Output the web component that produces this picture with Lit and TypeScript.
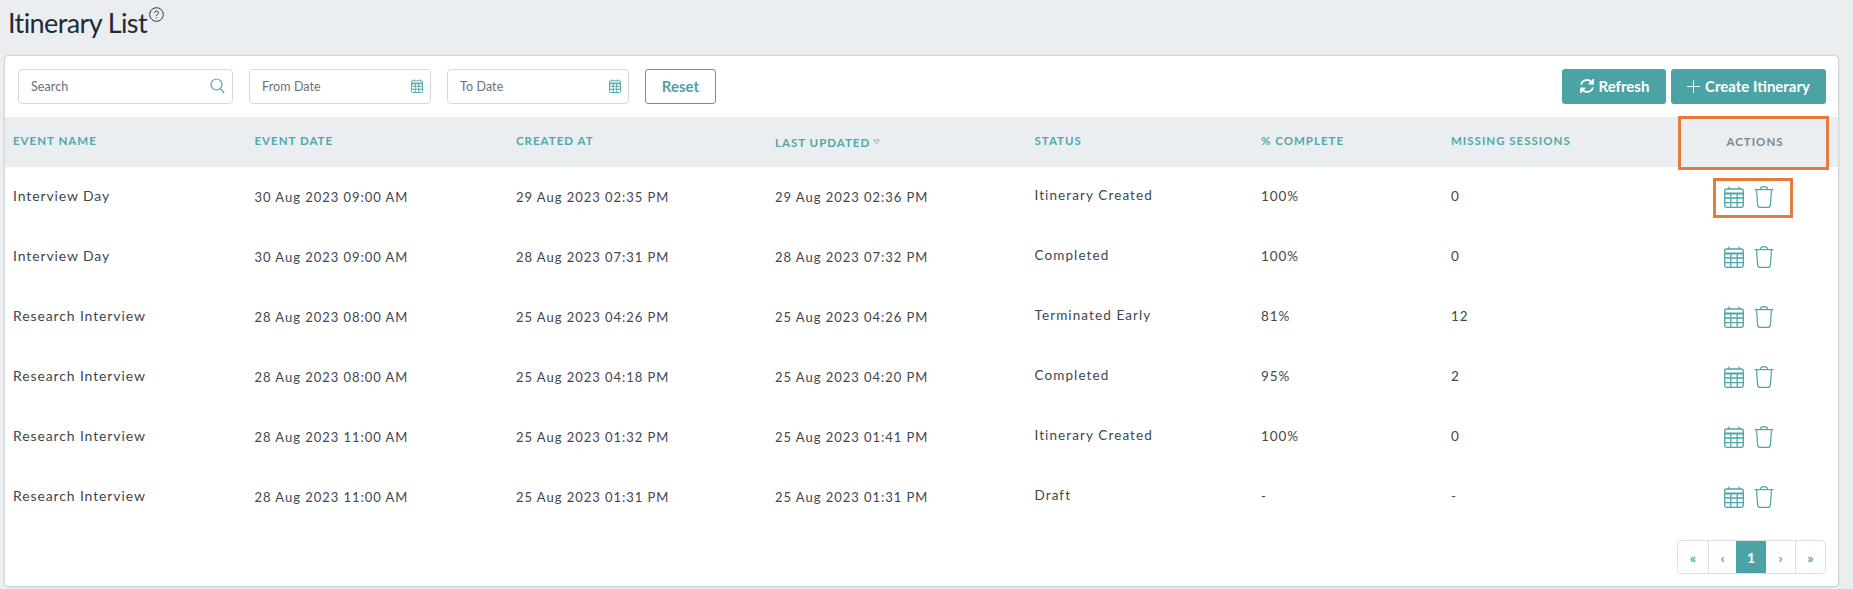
import { LitElement, html, css, svg } from "lit";
import { customElement } from "lit/decorators.js";

const rows = [
  ["Interview Day", "30 Aug 2023 09:00 AM", "29 Aug 2023 02:35 PM", "29 Aug 2023 02:36 PM", "Itinerary Created", "100%", "0"],
  ["Interview Day", "30 Aug 2023 09:00 AM", "28 Aug 2023 07:31 PM", "28 Aug 2023 07:32 PM", "Completed", "100%", "0"],
  ["Research Interview", "28 Aug 2023 08:00 AM", "25 Aug 2023 04:26 PM", "25 Aug 2023 04:26 PM", "Terminated Early", "81%", "12"],
  ["Research Interview", "28 Aug 2023 08:00 AM", "25 Aug 2023 04:18 PM", "25 Aug 2023 04:20 PM", "Completed", "95%", "2"],
  ["Research Interview", "28 Aug 2023 11:00 AM", "25 Aug 2023 01:32 PM", "25 Aug 2023 01:41 PM", "Itinerary Created", "100%", "0"],
  ["Research Interview", "28 Aug 2023 11:00 AM", "25 Aug 2023 01:31 PM", "25 Aug 2023 01:31 PM", "Draft", "-", "-"],
];

const calendar = svg`<svg class="ic-cal" viewBox="0 0 20 22" fill="none" stroke="#4ea5a7" stroke-width="1.3">
  <rect x="0.7" y="3" width="18.6" height="18.3" rx="2"/>
  <path d="M5 0.5V3M15 0.5V3" />
  <path d="M0.7 7.5H19.3" stroke-width="2"/>
  <path d="M0.7 12H19.3M0.7 16.6H19.3M6.8 7.5V21.3M13.2 7.5V21.3"/>
</svg>`;

const trash = svg`<svg class="ic-trash" viewBox="0 0 20 22" fill="none" stroke="#4ea5a7" stroke-width="1.2">
  <path d="M0.5 3.6H19.5"/>
  <path d="M6.5 3.4C6.5 1.4 7.5 0.7 10 0.7C12.5 0.7 13.5 1.4 13.5 3.4"/>
  <path d="M2.5 3.8L3.6 19C3.7 20.5 4.6 21.3 6 21.3H14C15.4 21.3 16.3 20.5 16.4 19L17.5 3.8"/>
</svg>`;

const smallCal = svg`<svg class="ic-date" viewBox="0 0 12 14" fill="none" stroke="#5aa9aa" stroke-width="1">
  <rect x="0.5" y="1.8" width="11" height="11.7" rx="1"/>
  <path d="M3 0.3V2M9 0.3V2"/>
  <path d="M0.5 4.4H11.5" stroke-width="1.6"/>
  <path d="M0.5 7.2H11.5M0.5 10.2H11.5M4.2 4.4V13.5M7.8 4.4V13.5"/>
</svg>`;

@customElement("app-root")
export class AppRoot extends LitElement {
  static styles = css`
    :host {
      display: block;
      height: 589px;
      box-sizing: border-box;
      background: #ebeef1;
      padding: 0 14px 0 4px;
      font-family: "Lato", "Liberation Sans", sans-serif;
      color: #3f464d;
      overflow: hidden;
    }
    .title-row { display: flex; align-items: flex-start; height: 55px; padding: 6px 0 0 4px; box-sizing: border-box; }
    h1 { margin: 0; font-size: 27px; line-height: 34px; font-weight: 400; color: #1f2a37; letter-spacing: -.6px; }
    .help { width: 15px; height: 15px; margin: 1px 0 0 2px; }
    .card {
      height: 532px;
      box-sizing: border-box;
      background: #fff;
      border: 1px solid #d3d6d9;
      border-radius: 5px;
      box-shadow: 0 0 2px rgba(0,0,0,.12);
      display: flex;
      flex-direction: column;
    }
    .toolbar { display: flex; align-items: center; height: 60px; padding: 0 12px 0 13px; box-sizing: border-box; }
    .field {
      height: 35px; box-sizing: border-box; border: 1px solid #d5d8dc; border-radius: 4px;
      display: flex; align-items: center; justify-content: space-between;
      font-size: 12.5px; color: #6b7178; padding: 0 7px 0 12px; letter-spacing: .1px;
    }
    .search { width: 215px; margin-right: 16px; }
    .date { width: 182px; margin-right: 16px; }
    .ic-date { width: 12px; height: 14px; }
    .ic-search { width: 15px; height: 16px; }
    .reset {
      width: 71px; height: 35px; box-sizing: border-box; border: 1px solid #4ba3a5; border-radius: 3px;
      display: flex; align-items: center; justify-content: center;
      color: #4ba3a5; font-weight: 700; font-size: 15px;
    }
    .spacer { flex: 1; }
    .btn {
      height: 35px; box-sizing: border-box; border-radius: 3px; background: #4ba3a5; color: #fff;
      display: flex; align-items: center; justify-content: center; gap: 4px;
      font-weight: 700; font-size: 15px;
    }
    .refresh { width: 104px; margin-right: 5px; }
    .create { width: 155px; gap: 5px; }
    .row, .head {
      display: grid;
      grid-template-columns: 241.5px 261.5px 259px 259.5px 226.5px 190px 229px 166px;
      align-items: center;
    }
    .head { height: 50px; background: #ebeef1; margin-top: 1px; }
    .th {
      padding-left: 8px; font-size: 11.5px; font-weight: 700; letter-spacing: 1px; color: #4fa8aa;
      text-transform: uppercase; position: relative; top: -2px;
    }
    .sorted { top: 0; display: flex; align-items: center; gap: 3px; }
    .th-actions {
      position: relative; height: 50px; line-height: 50px; text-align: center; width: 166px;
      font-size: 11.5px; font-weight: 700; letter-spacing: 1px; color: #7d8590; text-transform: uppercase;
    }
    .mark-head {
      position: absolute; left: 6px; right: 9px; top: -1px; bottom: -3px;
      border: 3px solid #e57a3c; box-sizing: border-box;
    }
    .row { height: 60px; font-size: 13.5px; letter-spacing: .9px; }
    .td { padding-left: 8px; position: relative; top: -1px; white-space: nowrap; }
    .name { font-size: 14px; top: -2px; letter-spacing: .88px; }
    .when { font-size: 13px; letter-spacing: .96px; top: 0; }
    .status { top: -2px; letter-spacing: 1.1px; }
    .actions { display: flex; justify-content: center; }
    .icons { display: flex; gap: 10px; position: relative; margin-right: 12px; }
    .ic-cal { width: 20px; height: 22px; display: block; }
    .ic-trash { width: 20px; height: 22px; display: block; }
    .mark-row {
      position: absolute; left: -11px; right: -19px; top: -8px; bottom: -10px;
      border: 3px solid #e57a3c; box-sizing: border-box;
    }
    .foot { display: flex; justify-content: flex-end; padding: 13px 12px 0 0; }
    .pager { display: flex; height: 34px; border: 1px solid #dcdfe3; border-radius: 4px; box-sizing: border-box; overflow: hidden; }
    .pg {
      display: flex; align-items: center; justify-content: center; color: #4ba3a5; font-size: 14px; font-weight: 700;
      border-left: 1px solid #dcdfe3; width: 29px; box-sizing: border-box;
    }
    .pg:first-child { border-left: 0; width: 30px; }
    .pg:nth-child(2) { width: 28px; }
    .pg:last-child { width: 30px; }
    .pg.on { background: #4ba3a5; color: #fff; border: 0; width: 30px; }
    .pg.on + .pg { border-left: 0; }
  `;

  render() {
    return html`
      <div class="title-row">
        <h1>Itinerary List</h1>
        <svg class="help" viewBox="0 0 15 15" fill="none" stroke="#2b3440" stroke-width="1">
          <circle cx="7.5" cy="7.5" r="6.8"/>
          <path d="M5.5 6C5.5 4.7 6.4 4 7.5 4C8.7 4 9.5 4.7 9.5 5.7C9.5 7.2 7.5 7.2 7.5 8.9"/>
          <path d="M7.5 10.3V11.3"/>
        </svg>
      </div>
      <div class="card">
        <div class="toolbar">
          <div class="field search">
            <span>Search</span>
            <svg class="ic-search" viewBox="0 0 15 16" fill="none" stroke="#4fa8aa" stroke-width="1.2">
              <circle cx="6.5" cy="6.5" r="5.5"/><path d="M10.5 10.8L14.2 15"/>
            </svg>
          </div>
          <div class="field date"><span>From Date</span>${smallCal}</div>
          <div class="field date"><span>To Date</span>${smallCal}</div>
          <div class="reset">Reset</div>
          <div class="spacer"></div>
          <div class="btn refresh">
            <svg width="16" height="16" viewBox="0 0 15 15" fill="none" stroke="#fff" stroke-width="1.7">
              <path d="M2 6.2A5.6 5.6 0 0 1 12 4.2"/>
              <path d="M13.3 1V5.4H9" stroke-width="1.4" fill="#fff"/>
              <path d="M13 8.8A5.6 5.6 0 0 1 3 10.8"/>
              <path d="M1.7 14V9.6H6" stroke-width="1.4" fill="#fff"/>
            </svg>
            <span>Refresh</span>
          </div>
          <div class="btn create">
            <svg width="13" height="13" viewBox="0 0 13 13" stroke="#fff" stroke-width="1"><path d="M6.5 0V13M0 6.5H13"/></svg>
            <span>Create Itinerary</span>
          </div>
        </div>
        <div class="head">
          <div class="th">Event Name</div>
          <div class="th">Event Date</div>
          <div class="th">Created At</div>
          <div class="th sorted"><span>Last Updated</span>
            <svg width="7" height="6" viewBox="0 0 7 6" fill="none" stroke="#6db3b5" stroke-width=".8"><path d="M0.6 1H6.4L3.5 5Z"/></svg>
          </div>
          <div class="th">Status</div>
          <div class="th">% Complete</div>
          <div class="th">Missing Sessions</div>
          <div class="th-actions">Actions<span class="mark-head"></span></div>
        </div>
        ${rows.map((r, i) => html`
          <div class="row">
            <div class="td name">${r[0]}</div>
            <div class="td when">${r[1]}</div>
            <div class="td when">${r[2]}</div>
            <div class="td when">${r[3]}</div>
            <div class="td status">${r[4]}</div>
            <div class="td">${r[5]}</div>
            <div class="td">${r[6]}</div>
            <div class="actions">
              <div class="icons">${calendar}${trash}${i === 0 ? html`<span class="mark-row"></span>` : ""}</div>
            </div>
          </div>`)}
        <div class="foot">
          <div class="pager">
            <div class="pg">«</div><div class="pg">‹</div><div class="pg on">1</div><div class="pg">›</div><div class="pg">»</div>
          </div>
        </div>
      </div>
    `;
  }
}
